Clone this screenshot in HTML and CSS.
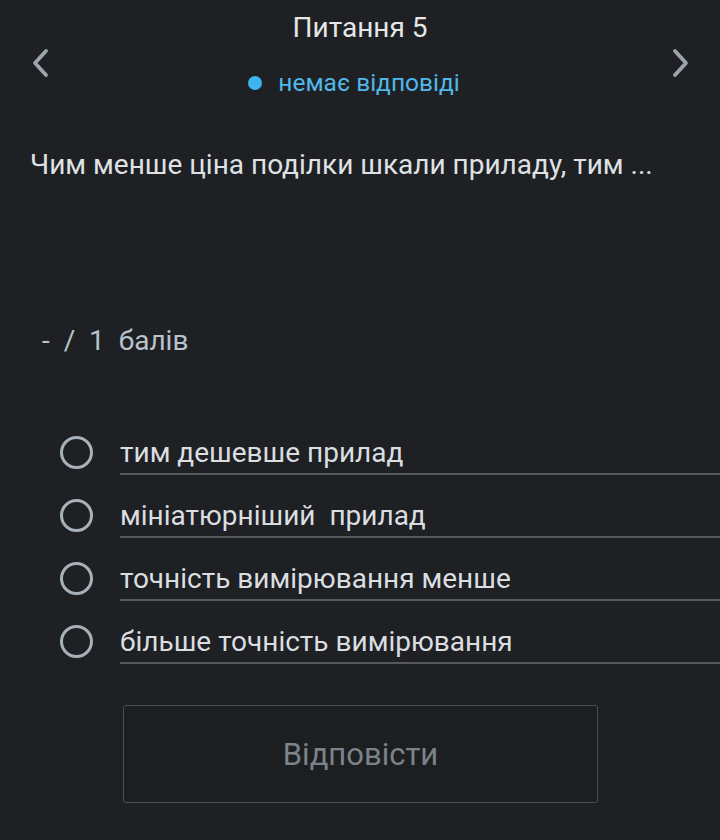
FILE: index.html
```html
<!DOCTYPE html>
<html>
<head>
    <meta charset="UTF-8">
    <title>Питання 5</title>
    <link rel="stylesheet" href="styles.css">
</head>
<body>

<div class="header">
    <a href="javascript:;" class="arrow" id="prev">
        <svg width="20" height="30" viewBox="0 0 20 30"><path d="M15 3 L4 15 L15 27" fill="none" stroke="#9aa5ad" stroke-width="3.8" stroke-linecap="round" stroke-linejoin="round"/></svg>
    </a>
    <div class="head-center">
        <div class="title">Питання 5</div>
        <div class="status"><span class="dot"></span>немає відповіді</div>
    </div>
    <a href="javascript:;" class="arrow" id="next">
        <svg width="20" height="30" viewBox="0 0 20 30"><path d="M5 3 L16 15 L5 27" fill="none" stroke="#9aa5ad" stroke-width="3.8" stroke-linecap="round" stroke-linejoin="round"/></svg>
    </a>
</div>

<div class="question">Чим менше ціна поділки шкали приладу, тим ...</div>

<div class="score">-&nbsp; /&nbsp; 1&nbsp; балів</div>

<ul class="options">
    <li><span class="radio"></span><span class="label">тим дешевше прилад</span></li>
    <li><span class="radio"></span><span class="label">мініатюрніший&nbsp; прилад</span></li>
    <li><span class="radio"></span><span class="label">точність вимірювання менше</span></li>
    <li><span class="radio"></span><span class="label">більше точність вимірювання</span></li>
</ul>

<div class="actions">
    <a href="javascript:;" class="answer">Відповісти</a>
</div>

</body>
</html>
```

FILE: styles.css
```css
body,div,ul,li{margin:0;padding:0;}
body {
    background: #1f2023;
    font-family: Roboto, "Noto Sans", sans-serif;
    width: 720px;
    height: 840px;
    overflow: hidden;
}
.header {
    display: flex;
    align-items: center;
    height: 120px;
}
.arrow {
    display: flex;
    padding-top: 6px;
}
#prev {
    justify-content: flex-start;
    padding-left: 31px;
    width: 51px;
}
#next {
    justify-content: flex-end;
    padding-right: 30px;
    width: 52px;
}
.head-center {
    flex: 1;
    display: flex;
    flex-direction: column;
    align-items: center;
    padding-bottom: 10px;
}
.title {
    font-size: 28px;
    line-height: 32px;
    color: #e4e6e8;
}
.status {
    margin-top: 24px;
    padding-right: 10px;
    font-size: 24.5px;
    line-height: 30px;
    color: #4fb8e8;
    display: flex;
    align-items: center;
}
.dot {
    width: 14px;
    height: 14px;
    border-radius: 50%;
    background: #3cb4f0;
    margin-right: 16px;
    margin-left: -2px;
}
.question {
    margin-top: 27px;
    padding-left: 30px;
    font-size: 28px;
    line-height: 36px;
    color: #dfe2e5;
}
.score {
    margin-top: 140px;
    padding-left: 42px;
    font-size: 28px;
    line-height: 36px;
    color: #b8c3cb;
}
.options {
    list-style: none;
    margin-top: 65px;
}
.options li {
    display: flex;
    align-items: center;
    height: 63px;
}
.radio {
    box-sizing: border-box;
    width: 33px;
    height: 33px;
    border: 3.8px solid #a6b1b9;
    border-radius: 50%;
    margin-left: 60px;
    margin-right: 27px;
    margin-top: -6px;
}
.label {
    flex: 1;
    font-size: 28px;
    line-height: 34px;
    color: #dadee1;
    border-bottom: 2px solid #58595c;
    padding-bottom: 3px;
}
.actions {
    padding: 29px 0 0 123px;
}
.answer {
    display: flex;
    justify-content: center;
    align-items: center;
    box-sizing: border-box;
    width: 475px;
    height: 98px;
    border: 1px solid #4b4d50;
    border-radius: 3px;
    background: #1d1e20;
    color: #7b838a;
    font-size: 31px;
    text-decoration: none;
}
```
